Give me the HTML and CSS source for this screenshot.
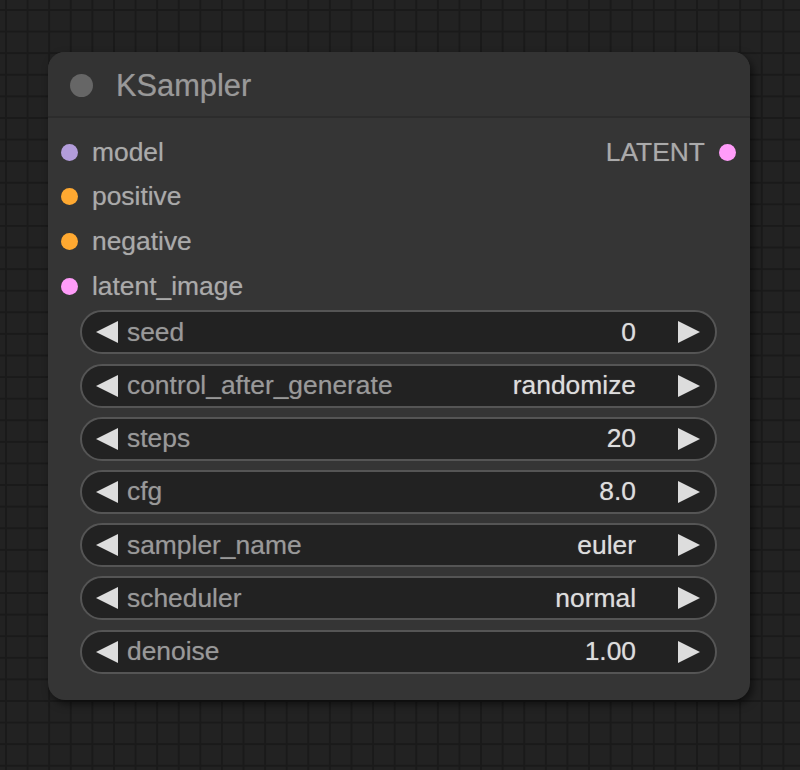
FILE: index.html
```html
<!DOCTYPE html>
<html lang="en">
<head>
  <meta charset="UTF-8" />
  <title>KSampler</title>
  <link rel="stylesheet" href="styles.css">
</head>
<body>

  <div class="node">
    <div class="node-title">
      <span class="title-dot"></span>
      <span class="title-text">KSampler</span>
    </div>

    <div class="slots">
      <div class="slot-row">
        <div class="slot"><span class="dot model"></span>model</div>
        <div class="slot out">LATENT<span class="dot latent"></span></div>
      </div>
      <div class="slot-row">
        <div class="slot"><span class="dot cond"></span>positive</div>
      </div>
      <div class="slot-row">
        <div class="slot"><span class="dot cond"></span>negative</div>
      </div>
      <div class="slot-row">
        <div class="slot"><span class="dot latent"></span>latent_image</div>
      </div>
    </div>

    <div class="widgets" id="widgets"></div>
  </div>

  <script>
    const widgets = [
      { name: "seed", value: "0" },
      { name: "control_after_generate", value: "randomize" },
      { name: "steps", value: "20" },
      { name: "cfg", value: "8.0" },
      { name: "sampler_name", value: "euler" },
      { name: "scheduler", value: "normal" },
      { name: "denoise", value: "1.00" }
    ];

    const leftArrow = '<svg class="arrow" viewBox="0 0 22 22"><polygon points="22,0 22,22 0,11" /></svg>';
    const rightArrow = '<svg class="arrow" viewBox="0 0 22 22"><polygon points="0,0 0,22 22,11" /></svg>';

    const list = document.getElementById("widgets");
    widgets.forEach(w => {
      list.innerHTML += `
        <div class="widget">
          ${leftArrow}
          <span class="w-name">${w.name}</span>
          <span class="w-value">${w.value}</span>
          ${rightArrow}
        </div>
      `;
    });
  </script>

</body>
</html>
```

FILE: styles.css
```css
/* canvas with grid */
body {
  margin: 0;
  width: 800px;
  height: 770px;
  overflow: hidden;
  font-family: 'Liberation Sans', Arial, sans-serif;
  background-color: #222222;
  background-image:
    linear-gradient(to right, #1a1a1a 2px, transparent 2px),
    linear-gradient(to bottom, #1a1a1a 2px, transparent 2px);
  background-size: 21.6px 21.6px;
  background-position: 5px 9px;
}

.node {
  margin: 52px 0 0 48px;
  width: 702px;
  height: 648px;
  box-sizing: border-box;
  background: #353535;
  border-radius: 17px;
  box-shadow: 3px 4px 8px rgba(0, 0, 0, 0.55);
  display: flex;
  flex-direction: column;
}

.node-title {
  height: 66px;
  display: flex;
  align-items: center;
  padding-left: 22px;
  gap: 23px;
  background: #333333;
  border-radius: 17px 17px 0 0;
  border-bottom: 2px solid #2c2c2c;
  box-sizing: border-box;
}

.title-dot {
  width: 23px;
  height: 23px;
  border-radius: 50%;
  background: #666666;
  margin-top: 2px;
}

.title-text {
  font-size: 30.8px;
  color: #999999;
  margin-top: 3px;
  text-shadow: 0 0 1px rgba(153, 153, 153, 0.5);
}

.slots {
  padding-top: 12px;
}

.slot-row {
  height: 44.6px;
  display: flex;
  align-items: center;
  justify-content: space-between;
  padding: 0 14px 0 13px;
}

.slot {
  display: flex;
  align-items: center;
  gap: 14px;
  font-size: 26.4px;
  color: #aaaaaa;
  text-shadow: 0 0 1px rgba(170, 170, 170, 0.5);
}

.dot {
  width: 17px;
  height: 17px;
  border-radius: 50%;
}

.model { background: #b39ddb; }
.cond { background: #ffa931; }
.latent { background: #ff9cf9; }

.widgets {
  margin-top: 2px;
  padding: 0 33px 0 32px;
  display: flex;
  flex-direction: column;
  gap: 9.2px;
}

.widget {
  height: 44px;
  box-sizing: border-box;
  background: #222222;
  border: 2px solid #555555;
  border-radius: 22px;
  display: flex;
  align-items: center;
  padding: 0 15px 0 14px;
  font-size: 26.4px;
}

.arrow {
  width: 22px;
  height: 22px;
  fill: #dddddd;
  flex-shrink: 0;
}

.w-name {
  margin-left: 9px;
  color: #999999;
  flex: 1;
  text-shadow: 0 0 1px rgba(153, 153, 153, 0.5);
}

.w-value {
  color: #dddddd;
  margin-right: 42px;
  text-shadow: 0 0 1px rgba(221, 221, 221, 0.6);
}
```
